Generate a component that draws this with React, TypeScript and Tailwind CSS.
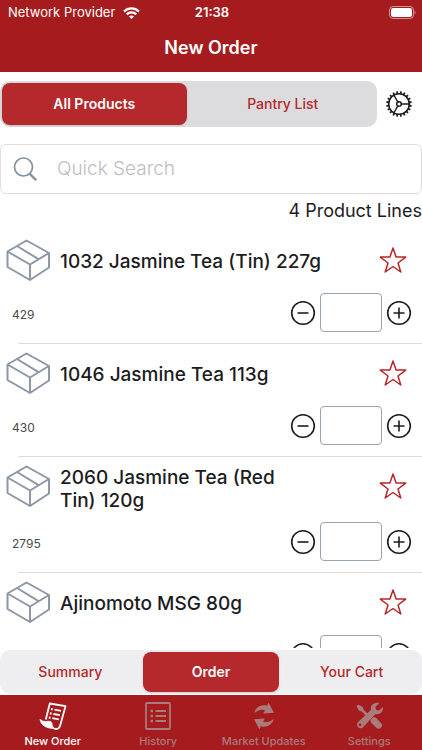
import { useState } from "react"

interface Product {
  id: number
  code?: string
  name: string
}

const products: Product[] = [
  { id: 1, code: "429", name: "1032 Jasmine Tea (Tin) 227g" },
  { id: 2, code: "430", name: "1046 Jasmine Tea 113g" },
  { id: 3, code: "2795", name: "2060 Jasmine Tea (Red\nTin) 120g" },
  { id: 4, name: "Ajinomoto MSG 80g" },
]

function WifiIcon() {
  return (
    <svg viewBox="0 0 17 12" className="h-3 w-[17px]" fill="none" stroke="currentColor" strokeWidth="2.200">
      <path d="M1 4.600C5.200.4 11.800.4 16 4.600" />
      <path d="M3.700 7.400c2.700-2.600 6.900-2.600 9.600 0" />
      <path d="M8.500 12 6 9.500c1.400-1.300 3.600-1.300 5 0z" fill="currentColor" stroke="none" />
    </svg>
  )
}

function BatteryIcon() {
  return (
    <svg viewBox="0 0 27 13" className="h-[13px] w-[27px]" fill="none">
      <rect x=".5" y=".5" width="24" height="12" rx="3.500" stroke="white" strokeOpacity=".5" />
      <rect x="2" y="2" width="21" height="9" rx="2.200" fill="white" />
      <path d="M25.700 4.500c1.300.6 1.300 3.400 0 4z" fill="white" fillOpacity=".5" />
    </svg>
  )
}

function GearIcon() {
  const teeth = Array.from({ length: 20 }, (_, i) => i * 18 + 9)
  return (
    <svg viewBox="-13 -13 26 26" className="size-[26px]" fill="none" stroke="currentColor">
      <circle r="10.300" strokeWidth="1.600" />
      {teeth.map((angle) => (
        <path key={angle} d="M0-10.500V-12.700" strokeWidth="1.800" transform={`rotate(${angle})`} />
      ))}
      <circle r="2.300" strokeWidth="1.500" />
      <path d="M2.300 0H10M-1.200-2-5.200-9M-1.200 2-5.200 9" strokeWidth="1.500" />
    </svg>
  )
}

function SearchIcon() {
  return (
    <svg viewBox="0 0 24 24" className="size-6 shrink-0 text-[#84919f]" fill="none" stroke="currentColor">
      <circle cx="10.500" cy="10" r="9" strokeWidth="1.700" />
      <path d="m16.800 16.800 6.400 6.400" strokeWidth="2.400" />
    </svg>
  )
}

function BoxIcon() {
  return (
    <svg
      viewBox="0 0 44 42"
      className="h-[42px] w-11 shrink-0 text-[#8d97a5]"
      fill="none"
      stroke="currentColor"
      strokeWidth="2"
      strokeLinejoin="round"
    >
      <path d="M1.500 12.500 20.500 1.500 43 14V28.500L24 41 1.500 28z" />
      <path d="M1.500 12.500 24 25.500 43 14M24 25.500V41M11 7 32.500 20.200" />
    </svg>
  )
}

function StarIcon({ filled }: { filled: boolean }) {
  return (
    <svg
      viewBox="0 0 28 28"
      className="size-7"
      fill={filled ? "currentColor" : "none"}
      stroke="currentColor"
      strokeWidth="1.500"
      strokeLinejoin="round"
    >
      <path d="M14 2 17.100 11.100H26.700L19 17 21.800 26 14 20.500 6.200 26 9 17 1.300 11.100H10.900z" />
    </svg>
  )
}

function CircleIcon({ plus }: { plus?: boolean }) {
  return (
    <svg viewBox="0 0 26 26" className="size-[26px]" fill="none" stroke="currentColor" strokeWidth="1.600">
      <circle cx="13" cy="13" r="11.300" />
      <path d={plus ? "M7.500 13h11M13 7.500v11" : "M7.500 13h11"} />
    </svg>
  )
}

function ReceiptIcon() {
  return (
    <svg viewBox="0 0 28 28" className="size-7" fill="none" stroke="currentColor" strokeWidth="1.800" strokeLinejoin="round">
      <path d="M6.800 17.500 10.800 1.500 26.500 4.200 21 24C20.200 27 17.500 27.500 15.500 26.500" />
      <path d="M1 17.200c2.500 2.800 5.500 2.300 8.500 2.100 2.500-.2 3.300.7 3.500 2.700.2 1.800.8 3.500 3 4.700C9 26.300 2 24.500 1 17.200z" fill="currentColor" strokeWidth=".8" />
      <path d="m15.500 7.700 6.500 1.200M14.400 12l6.500 1.200M13.300 16.200l6.500 1.200" />
      <path d="m12 7 1.700.3M10.900 11.300l1.700.3M9.800 15.500l1.700.3" strokeWidth="2.200" />
    </svg>
  )
}

function HistoryIcon() {
  return (
    <svg viewBox="0 0 28 28" className="size-7" fill="none" stroke="currentColor" strokeWidth="1.800">
      <rect x="2" y="1" width="24" height="26" rx="1" />
      <path d="M11.500 9H22M11.500 14H22M11.500 19H22" />
      <path d="M6.500 9H9M6.500 14H9M6.500 19H9" strokeWidth="2.400" />
    </svg>
  )
}

function UpdatesIcon() {
  return (
    <svg viewBox="0 0 28 28" className="size-7" fill="currentColor">
      <path d="M4.200 11.500C5 6 10.500 2 17.200 3.800L18.500.7 24 10.800 13.200 11.600 15 8.200C11 7 7.500 8 4.200 11.500z" />
      <path d="M23.800 16.500C23 22 17.500 26 10.800 24.200L9.500 27.300 4 17.200 14.800 16.400 13 19.800C17 21 20.500 20 23.800 16.500z" />
    </svg>
  )
}

function ToolsIcon() {
  return (
    <svg viewBox="0 0 28 28" className="size-7" fill="currentColor">
      <path d="M3.200 2.500 7.800 5l.8 2.700 6.200 6.100-1.900 1.900-6.200-6.200L4 8.700 1.500 4.200z" />
      <path d="m15.500 18 3-3 2.200.5 5.700 6c2.200 3-1.900 7-4.800 4.600L16 20.500z" />
      <path d="M20.500 1c1.300-.4 2.700-.3 3.700.2L20.500 5l.6 2.900 2.900.6 3.700-3.600c1.200 4.600-2.500 8.200-7.200 7.100L8 25.200c-3 3-8-1.200-5.200-5L15.900 8C15.200 4.500 17.200 1.800 20.500 1zM5 21.500a1.300 1.300 0 1 0 .1 2.600A1.300 1.300 0 0 0 5 21.500z" />
    </svg>
  )
}

function ProductRow({ product, first }: { product: Product; first: boolean }) {
  const [quantity, setQuantity] = useState("")
  const [favourite, setFavourite] = useState(false)

  const step = (amount: number) => {
    const next = Math.max(0, Number(quantity) + amount)
    setQuantity(next === 0 ? "" : String(next))
  }

  return (
    <li>
      <div className={first ? "ml-[18px] h-px" : "ml-[18px] h-px bg-[#d9dddd]"} />
      <div className="flex items-start pt-2 pr-[15px] pl-[6px]">
        <BoxIcon />
        <h2 className="ml-[10px] flex min-h-[45px] flex-1 items-center py-px text-[19px] leading-[23px] font-medium whitespace-pre-line text-[#1c1c1e]">
          {product.name}
        </h2>
        <button
          type="button"
          aria-label="Favourite"
          aria-pressed={favourite}
          onClick={() => setFavourite(!favourite)}
          className="mt-[7px] text-[#b9262a]"
        >
          <StarIcon filled={favourite} />
        </button>
      </div>
      <div className="flex items-center pt-[9px] pr-[10px] pb-[11px] pl-3 text-[#1c1c1e]">
        <span className="flex-1 pt-1 text-xs text-[#4a4a4a]">{product.code}</span>
        <button type="button" aria-label="Decrease quantity" onClick={() => step(-1)}>
          <CircleIcon />
        </button>
        <input
          aria-label={`Quantity of ${product.name}`}
          inputMode="numeric"
          value={quantity}
          onChange={(e) => setQuantity(e.target.value)}
          className="mx-1 h-[39px] w-[62px] rounded-[4px] border border-[#98a3b3] bg-white text-center text-lg outline-none"
        />
        <button type="button" aria-label="Increase quantity" onClick={() => step(1)}>
          <CircleIcon plus />
        </button>
      </div>
    </li>
  )
}

const tabs = [
  { label: "New Order", icon: <ReceiptIcon /> },
  { label: "History", icon: <HistoryIcon /> },
  { label: "Market Updates", icon: <UpdatesIcon /> },
  { label: "Settings", icon: <ToolsIcon /> },
]

export default function App() {
  const [list, setList] = useState("All Products")
  const [view, setView] = useState("Order")

  return (
    <div className="flex h-screen flex-col bg-white font-['Inter','Liberation_Sans',sans-serif]">
      <header className="bg-[#a61c1e] text-white">
        <div className="grid h-[25px] grid-cols-3 items-center pr-[6px] pl-2 text-[13px]">
          <div className="flex items-center gap-2 whitespace-nowrap">
            Network Provider
            <WifiIcon />
          </div>
          <div className="text-center font-semibold">21:38</div>
          <div className="flex justify-end">
            <BatteryIcon />
          </div>
        </div>
        <h1 className="h-[47px] text-center text-lg leading-[46px] font-semibold">New Order</h1>
      </header>

      <div className="flex items-center pt-[9px] pr-[10px]">
        <div className="flex h-[46px] flex-1 gap-1 rounded-[10px] bg-[#dcdcde] p-[2px]">
          {["All Products", "Pantry List"].map((label) => (
            <button
              key={label}
              type="button"
              aria-pressed={list === label}
              onClick={() => setList(label)}
              className={
                list === label
                  ? "flex-1 rounded-lg bg-[#b5282b] text-sm font-semibold text-white shadow"
                  : "flex-1 rounded-lg text-sm font-medium text-[#b5282b]"
              }
            >
              {label}
            </button>
          ))}
        </div>
        <button type="button" aria-label="Filter options" className="ml-[9px] text-[#1c1c1e]">
          <GearIcon />
        </button>
      </div>

      <label className="mt-[17px] flex h-[50px] shrink-0 items-center rounded-md border border-[#dededf] pl-3">
        <SearchIcon />
        <input
          type="search"
          aria-label="Quick Search"
          placeholder="Quick Search"
          className="ml-5 min-w-0 flex-1 text-[19px] font-light outline-none placeholder:text-[#bdbdc1]"
        />
      </label>

      <p className="h-9 pt-[5px] text-right text-lg leading-6 text-[#1c1c1e]">{products.length} Product Lines</p>

      <ul className="min-h-0 flex-1 overflow-y-auto [scrollbar-width:none]">
        {products.map((product, i) => (
          <ProductRow key={product.id} product={product} first={i === 0} />
        ))}
      </ul>

      <div className="mt-[2px] mb-px flex h-11 shrink-0 gap-1 rounded-[10px] bg-[#eeeef0] p-[2px]">
        {["Summary", "Order", "Your Cart"].map((label) => (
          <button
            key={label}
            type="button"
            aria-pressed={view === label}
            onClick={() => setView(label)}
            className={
              view === label
                ? "flex-1 rounded-lg bg-[#b5282b] text-sm font-semibold text-white shadow"
                : "flex-1 rounded-lg text-sm font-medium text-[#b5282b]"
            }
          >
            {label}
          </button>
        ))}
      </div>

      <nav className="grid h-[55px] shrink-0 grid-cols-4 bg-[#a61c1e] text-[11px] font-medium">
        {tabs.map((tab, i) => (
          <a
            key={tab.label}
            href="#"
            aria-current={i === 0 ? "page" : undefined}
            className={
              i === 0
                ? "flex flex-col items-center gap-[3px] pt-[7px] leading-4 text-white"
                : "flex flex-col items-center gap-[3px] pt-[7px] leading-4 text-[#a97b7c]"
            }
          >
            {tab.icon}
            {tab.label}
          </a>
        ))}
      </nav>
    </div>
  )
}
